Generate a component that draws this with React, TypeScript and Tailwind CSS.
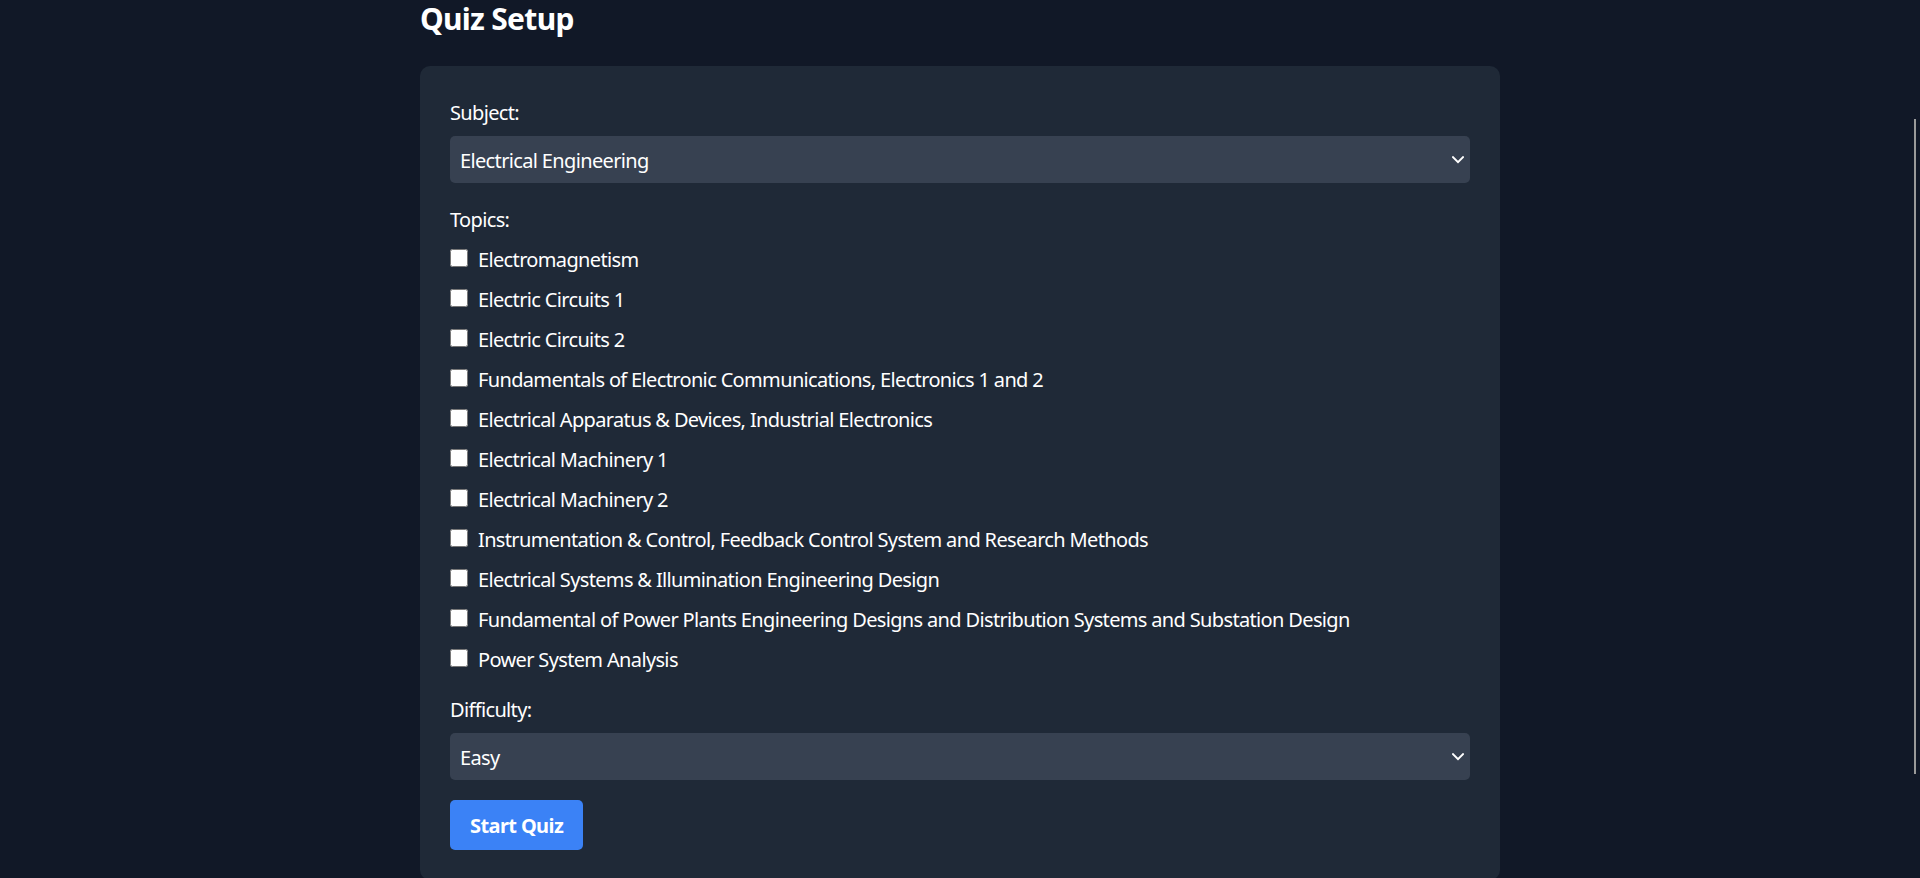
import React from "react";

const topics = [
  "Electromagnetism",
  "Electric Circuits 1",
  "Electric Circuits 2",
  "Fundamentals of Electronic Communications, Electronics 1 and 2",
  "Electrical Apparatus & Devices, Industrial Electronics",
  "Electrical Machinery 1",
  "Electrical Machinery 2",
  "Instrumentation & Control, Feedback Control System and Research Methods",
  "Electrical Systems & Illumination Engineering Design",
  "Fundamental of Power Plants Engineering Designs and Distribution Systems and Substation Design",
  "Power System Analysis",
];

function Chevron() {
  return (
    <svg width="12" height="8" viewBox="0 0 12 8" fill="none" className="shrink-0">
      <path d="M1 1.2 L6 6.2 L11 1.2" stroke="white" strokeWidth="2" strokeLinecap="square" />
    </svg>
  );
}

function Select({ value }: { value: string }) {
  return (
    <div className="flex h-[47px] items-center justify-between rounded-[5px] bg-[#374151] pl-[10px] pr-[6px] text-[20px] leading-[30px] tracking-[-0.65px] text-white">
      <span className="pt-[3px]">{value}</span>
      <Chevron />
    </div>
  );
}

function Label({ children }: { children: React.ReactNode }) {
  return (
    <div className="mb-[10px] h-[30px] pt-[4px] text-[20px] leading-[26px] tracking-[-0.65px]">{children}</div>
  );
}

export default function App() {
  return (
    <div
      className="relative min-h-screen bg-[#111827] text-white"
      style={{ fontFamily: '"Noto Sans", "Open Sans", sans-serif' }}
    >
      <div className="mx-auto w-[1120px] px-[20px]">
        <h1 className="mb-[31px] pt-[3px] text-[30px] font-bold leading-[32px] tracking-[-0.7px]">Quiz Setup</h1>
        <div className="rounded-[10px] bg-[#1f2937] p-[30px]">
          <Label>Subject:</Label>
          <div className="mb-[20px]">
            <Select value="Electrical Engineering" />
          </div>
          <Label>Topics:</Label>
          <div className="mb-[20px] flex flex-col gap-[10px]">
            {topics.map((t) => (
              <label key={t} className="flex h-[30px] items-center text-[20px] leading-[30px] tracking-[-0.65px]">
                <input type="checkbox" className="m-0 mr-[10px] h-[18px] w-[18px] shrink-0" />
                <span className="pt-[3px]">{t}</span>
              </label>
            ))}
          </div>
          <Label>Difficulty:</Label>
          <div className="mb-[20px]">
            <Select value="Easy" />
          </div>
          <button className="h-[50px] rounded-[5px] bg-[#3b82f6] px-[20px] pt-[2px] text-[20px] font-bold leading-[30px] tracking-[-0.6px] text-white">
            Start Quiz
          </button>
        </div>
      </div>
      <div className="absolute right-[4px] top-[119px] h-[655px] w-[2px] bg-[#9a9a9a]" />
    </div>
  );
}
